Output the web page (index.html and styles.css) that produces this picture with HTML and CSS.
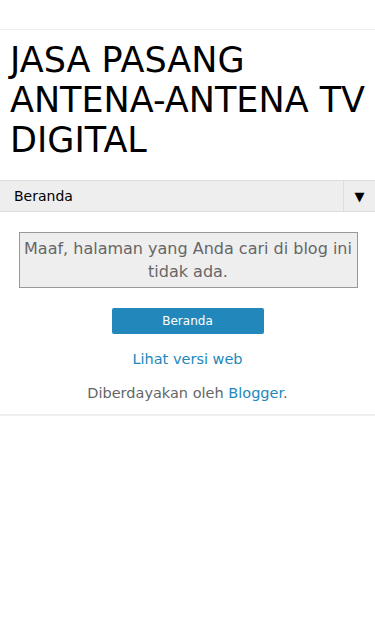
FILE: index.html
```html
<!DOCTYPE html>
<html>
  <head>
    <title>JASA PASANG ANTENA-ANTENA TV DIGITAL</title>
    <link rel="stylesheet" href="styles.css">
  </head>
  <body>
    <div class="top-bar"></div>
    <div class="header">
      <h1 class="title">JASA PASANG ANTENA-ANTENA TV DIGITAL</h1>
    </div>
    <div class="nav">
      <span class="nav-label">Beranda</span>
      <span class="nav-arrow">&#9660;</span>
    </div>
    <div class="main">
      <div class="status-msg">Maaf, halaman yang Anda cari di blog ini tidak ada.</div>
      <a class="home-button" href="#">Beranda</a>
      <a class="web-link" href="#">Lihat versi web</a>
      <p class="powered">Diberdayakan oleh <a href="#">Blogger</a>.</p>
    </div>
  </body>
</html>
```

FILE: styles.css
```css
body{
  margin: 0;
  font-family: "DejaVu Sans", sans-serif;
  background: #fff;
  color: #000;
}
a{
  color: #2288bb;
  text-decoration: none;
}
.top-bar{
  height: 29px;
  border-bottom: 1px solid #eee;
}
.header{
  padding: 10px 4px 20px 10px;
}
.title{
  margin: 0;
  font-size: 35px;
  font-weight: normal;
  line-height: 40px;
}
.nav{
  display: flex;
  height: 30px;
  background: #eee;
  border-top: 1px solid #ddd;
  border-bottom: 1px solid #ddd;
}
.nav-label{
  flex: 1;
  padding-left: 14px;
  font-size: 14px;
  line-height: 30px;
}
.nav-arrow{
  width: 31px;
  border-left: 1px solid #ddd;
  text-align: center;
  font-size: 13px;
  line-height: 32px;
}
.main{
  display: flex;
  flex-direction: column;
  align-items: center;
  padding: 20px 0 10px 0;
  border-bottom: 2px solid #eee;
}
.status-msg{
  box-sizing: border-box;
  width: 339px;
  margin-left: 1px;
  padding: 4px 4px;
  background: #eee;
  border: 1px solid #999;
  color: #666;
  font-size: 16px;
  line-height: 23px;
  text-align: center;
}
.home-button{
  display: block;
  width: 152px;
  height: 26px;
  margin-top: 20px;
  background: #2288bb;
  border-radius: 2px;
  color: #fff;
  font-size: 12px;
  line-height: 26px;
  text-align: center;
}
.web-link{
  margin-top: 14px;
  font-size: 14.5px;
  line-height: 22px;
}
.powered{
  margin: 12px 0 0 0;
  color: #666;
  font-size: 14.5px;
  line-height: 22px;
}
```
